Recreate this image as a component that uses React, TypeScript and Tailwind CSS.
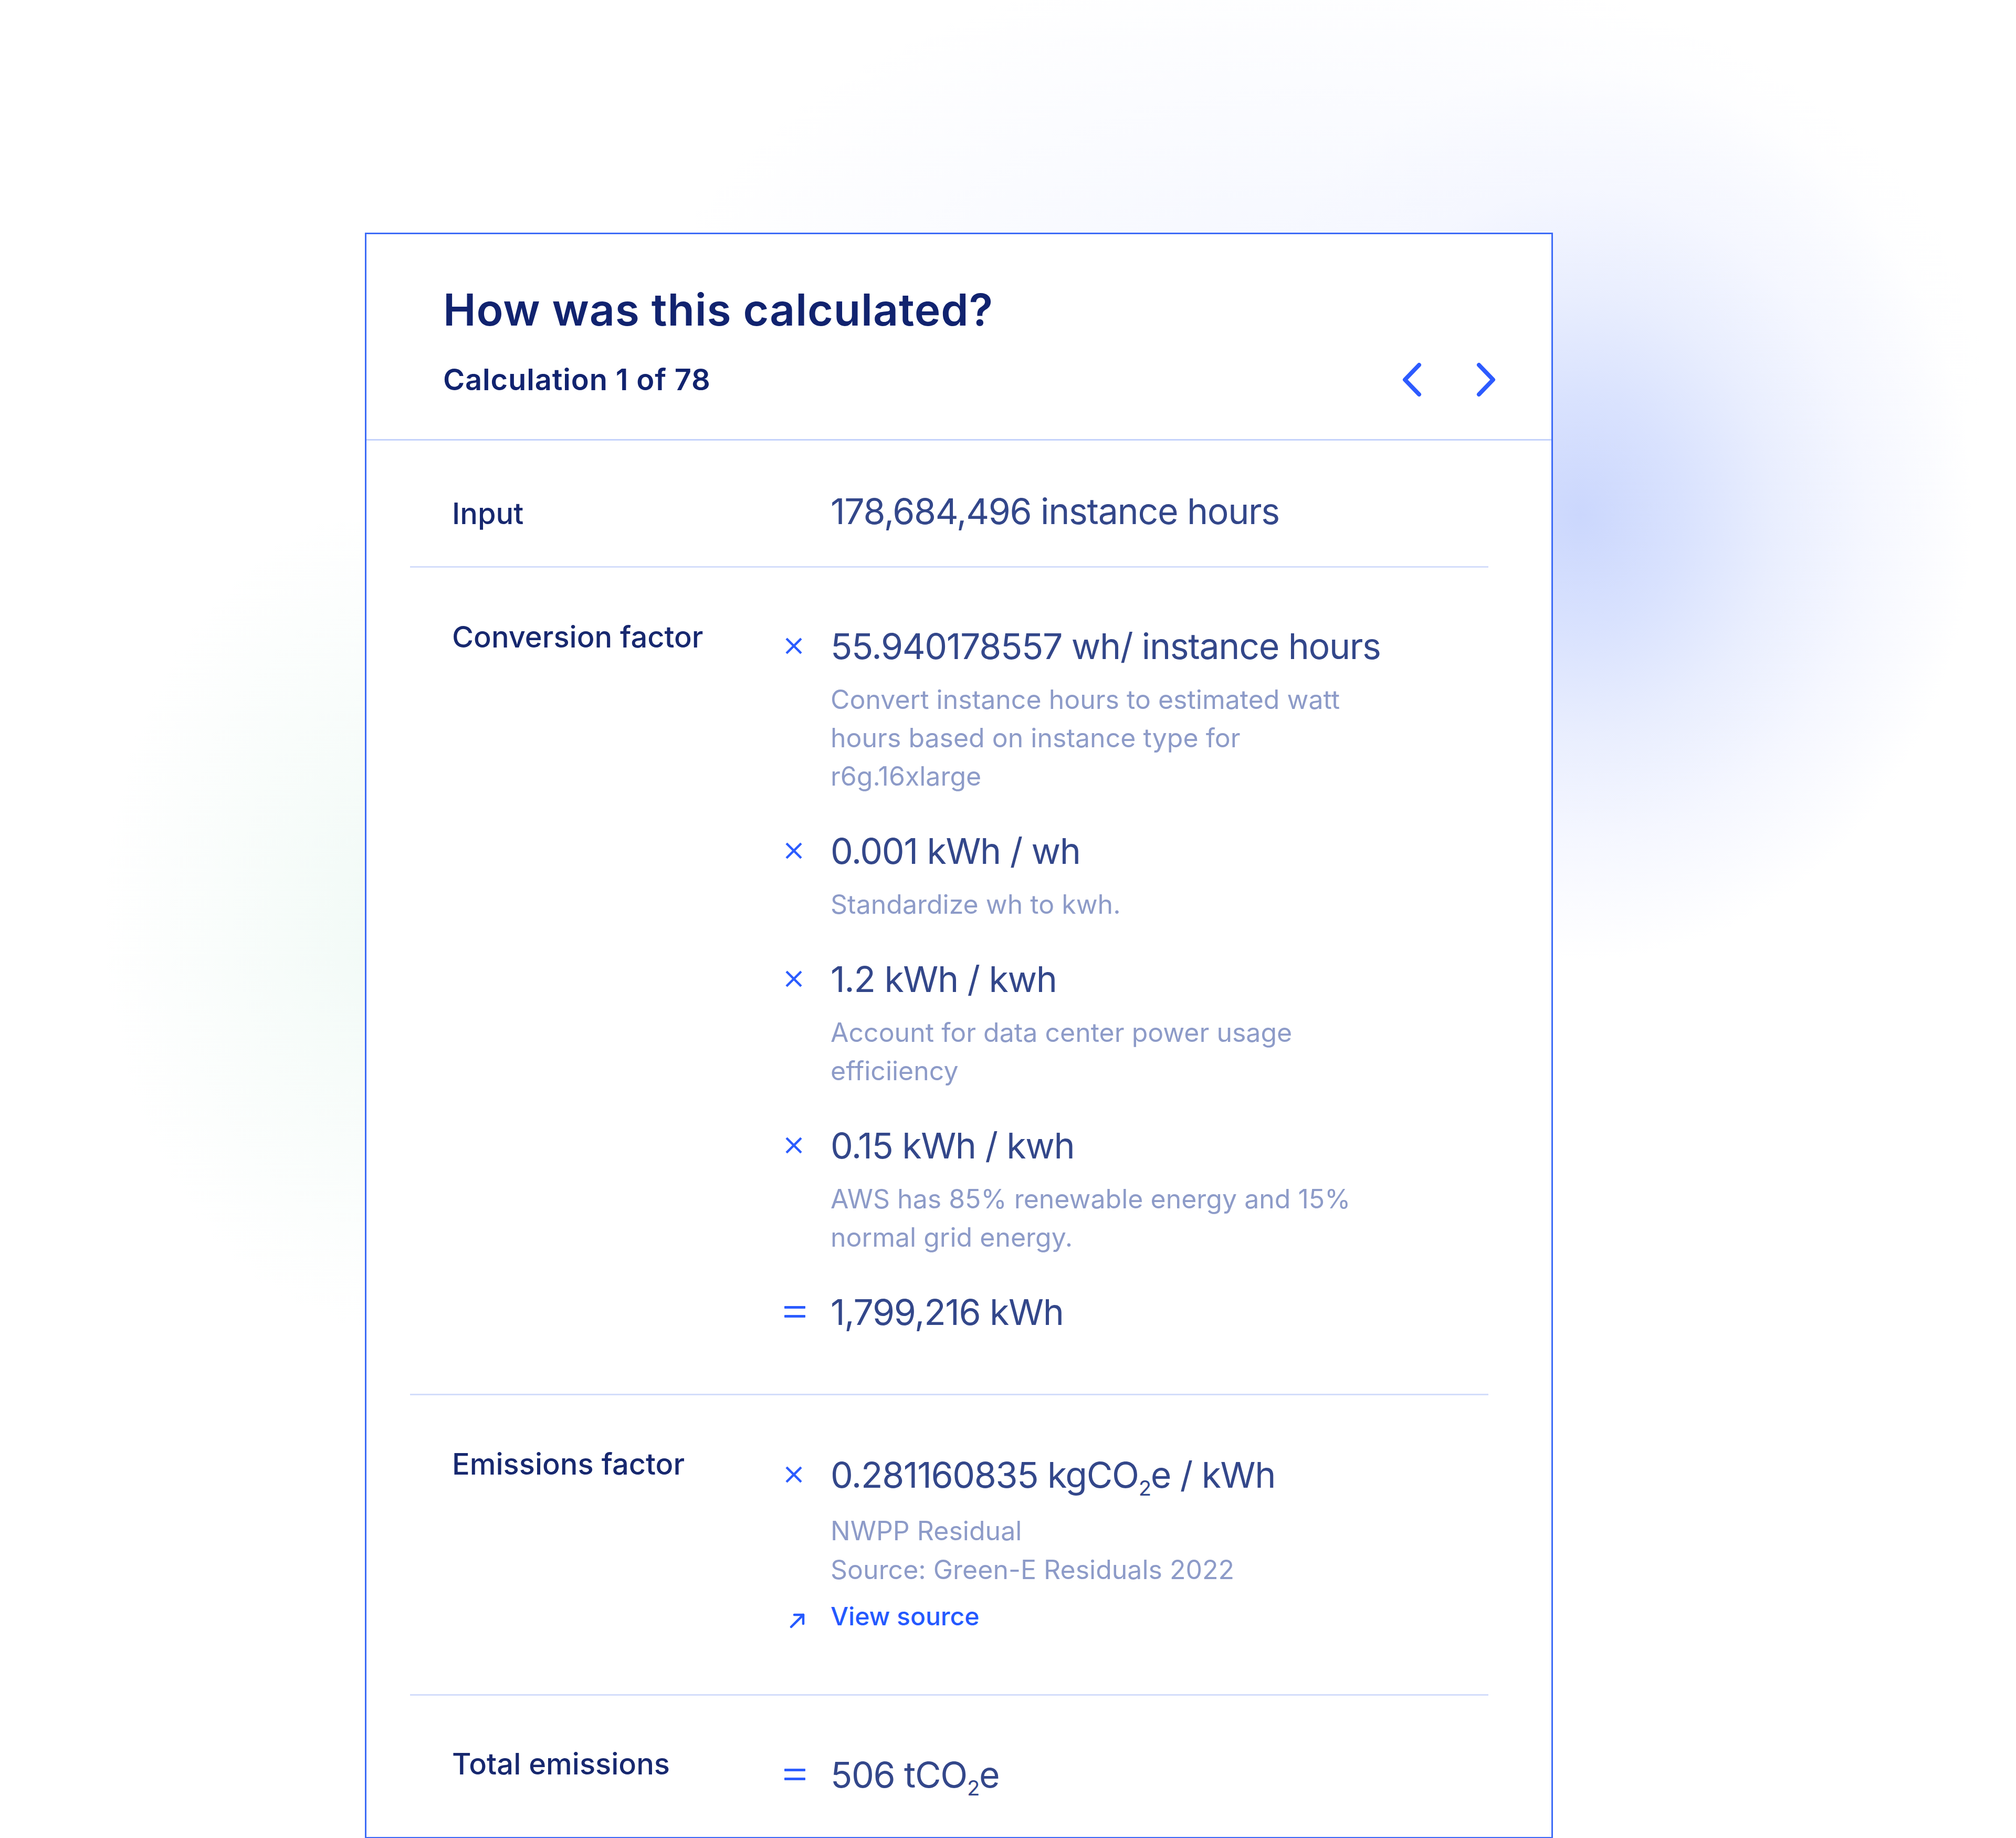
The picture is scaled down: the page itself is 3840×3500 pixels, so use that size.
import type { ReactNode } from 'react'

// operator glyphs drawn as svg so size/stroke match the reference
function Times() {
  return (
    <svg width="36" height="36" viewBox="0 0 36 36" fill="none" stroke="#2b5cff" strokeWidth="4.5">
      <line x1="4" y1="4" x2="32" y2="32" />
      <line x1="32" y1="4" x2="4" y2="32" />
    </svg>
  )
}

function Equals() {
  return (
    <svg width="40" height="22" viewBox="0 0 40 22" fill="#2b5cff">
      <rect x="0" y="0" width="40" height="5" rx="1" />
      <rect x="0" y="17" width="40" height="5" rx="1" />
    </svg>
  )
}

function ArrowUpRight() {
  return (
    <svg width="32" height="32" viewBox="0 0 32 32" fill="none" stroke="#2459ff" strokeWidth="4.5" strokeLinecap="round" strokeLinejoin="round">
      <line x1="4" y1="28" x2="27" y2="5" />
      <polyline points="10,5 27,5 27,22" />
    </svg>
  )
}

function Chevron({ dir }: { dir: 'left' | 'right' }) {
  return (
    <svg width="42" height="70" viewBox="0 0 42 70" fill="none" stroke="#2d5bff" strokeWidth="8" strokeLinecap="round" strokeLinejoin="round">
      <polyline points={dir === 'left' ? '34,7 7,35 34,63' : '8,7 35,35 8,63'} />
    </svg>
  )
}

function Sub({ children }: { children: ReactNode }) {
  return <span className="text-[40px] leading-none align-[-15px]">{children}</span>
}

// one factor line: operator, value and optional grey explanation
function Step({ op, value, desc, first }: { op: 'x' | '='; value: ReactNode; desc?: ReactNode; first?: boolean }) {
  return (
    <div className={first ? '' : 'mt-[63px]'}>
      <div className="flex">
        <div className="flex h-[84px] w-[88px] shrink-0 items-center">
          {op === 'x' ? <Times /> : <Equals />}
        </div>
        <div className="whitespace-nowrap text-[68px] leading-[84px] tracking-[-0.02em] text-[#33478a]">{value}</div>
      </div>
      {desc && (
        <div className="mt-[24px] pl-[88px] whitespace-nowrap text-[50px] leading-[73px] text-[#8d9bc8]">{desc}</div>
      )}
    </div>
  )
}

function Label({ children }: { children: ReactNode }) {
  return <div className="w-[633px] shrink-0 text-[56px] font-medium leading-[70px] text-[#17286f]">{children}</div>
}

export default function App() {
  return (
    <div className="h-[3500px] w-[3840px] overflow-hidden bg-white bg-[image:radial-gradient(ellipse_880px_1000px_at_3010px_980px,#cbd7fd_0%,#d9e2fe_22%,#e9eefe_42%,#f5f7ff_62%,rgba(255,255,255,0)_85%),radial-gradient(ellipse_1700px_1050px_at_2500px_700px,#f2f5ff_0%,rgba(255,255,255,0)_75%),radial-gradient(ellipse_750px_1050px_at_760px_1750px,#f1faf6_0%,rgba(255,255,255,0)_75%)] pl-[695px] pt-[443px] font-['Inter','Noto_Sans',sans-serif]">
      <div className="w-[2263px] border-[3px] border-[#3d6bf7] bg-white">
        {/* header */}
        <div className="border-b-[3px] border-[#c5d3fb] pb-[78px] pl-[146px] pr-[104px] pt-[94px]">
          <h1 className="text-[84px] font-semibold leading-[100px] tracking-[0.01em] text-[#11236f]">How was this calculated?</h1>
          <div className="mt-[48px] flex h-[70px] items-center justify-between">
            <span className="text-[56px] font-semibold leading-[70px] tracking-[0.015em] text-[#11236f]">Calculation 1 of 78</span>
            <div className="flex items-center gap-[98px]">
              <Chevron dir="left" />
              <Chevron dir="right" />
            </div>
          </div>
        </div>

        {/* body */}
        <div className="ml-[83px] mr-[120px]">
          <div className="flex items-baseline border-b-[3px] border-[#d3ddfb] pb-[63px] pl-[80px] pt-[92px]">
            <Label>Input</Label>
            <div className="pl-[88px] whitespace-nowrap text-[68px] leading-[84px] tracking-[-0.02em] text-[#33478a]">178,684,496 instance hours</div>
          </div>

          <div className="flex border-b-[3px] border-[#d3ddfb] pb-[114px] pl-[80px] pt-[97px]">
            <Label>Conversion factor</Label>
            <div className="mt-[10px]">
              <Step
                first
                op="x"
                value="55.940178557 wh/ instance hours"
                desc={<>Convert instance hours to estimated watt<br />hours based on instance type for<br />r6g.16xlarge</>}
              />
              <Step op="x" value="0.001 kWh / wh" desc="Standardize wh to kwh." />
              <Step op="x" value="1.2 kWh / kwh" desc={<>Account for data center power usage<br />efficiiency</>} />
              <Step op="x" value="0.15 kWh / kwh" desc={<>AWS has 85% renewable energy and 15%<br />normal grid energy.</>} />
              <Step op="=" value="1,799,216 kWh" />
            </div>
          </div>

          <div className="flex border-b-[3px] border-[#d3ddfb] pb-[118px] pl-[80px] pt-[96px]">
            <Label>Emissions factor</Label>
            <div className="mt-[13px]">
              <Step
                first
                op="x"
                value={<>0.281160835 kgCO<Sub>2</Sub>e / kWh</>}
                desc={<span className="leading-[74px]">NWPP Residual<br />Source: Green-E Residuals 2022</span>}
              />
              <div className="mt-[22px] flex h-[60px]">
                <div className="w-[88px] shrink-0 pl-[9px] pt-[22px]">
                  <ArrowUpRight />
                </div>
                <a className="text-[48px] font-medium leading-[60px] text-[#2459ff]">View source</a>
              </div>
            </div>
          </div>

          <div className="flex pb-[73px] pl-[80px] pt-[95px]">
            <Label>Total emissions</Label>
            <div className="mt-[13px]">
              <Step first op="=" value={<>506 tCO<Sub>2</Sub>e</>} />
            </div>
          </div>
        </div>
      </div>
    </div>
  )
}
